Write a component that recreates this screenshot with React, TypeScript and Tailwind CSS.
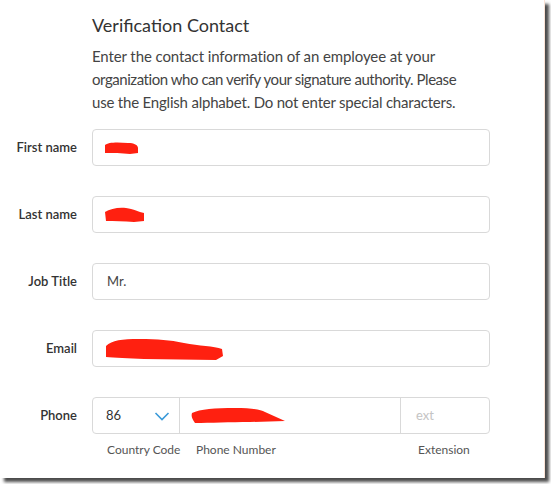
import React from "react";

const Scribble = ({ d, w, h }: { d: string; w: number; h: number }) => (
  <svg width={w} height={h} viewBox={`0 0 ${w} ${h}`} className="block">
    <path d={d} fill="#ff2010" />
  </svg>
);

const Row = ({ label, children }: { label: string; children: React.ReactNode }) => (
  <div className="flex items-center h-[37px]">
    <div className="w-[77px] text-right text-[13px] font-semibold text-[#333]">{label}</div>
    <div className="ml-[15px] w-[398px] h-[37px]">{children}</div>
  </div>
);

const Box = ({ children }: { children?: React.ReactNode }) => (
  <div className="h-full w-full rounded-[4px] border border-[#d9d9d9] bg-white flex items-center pl-[11px]">
    {children}
  </div>
);

export default function App() {
  return (
    <div className="w-[551px] h-[484px] bg-white" style={{ fontFamily: "Lato, 'Open Sans', sans-serif" }}>
      <div className="w-[545px] h-[478px] bg-white border-r border-[#fbe3d6] shadow-[4px_4px_3px_rgba(0,0,0,0.7)] flex flex-col">
        <div className="pl-[92px] pt-[13px]">
          <h1 className="text-[18px] leading-[24px] text-[#333]">Verification Contact</h1>
          <p className="mt-[8px] whitespace-nowrap text-[15px] leading-[23px] text-[#444] tracking-[-0.1px]">
            Enter the contact information of an employee at your
            <br />
            <span className="tracking-[-0.45px]">organization who can verify your signature authority. Please</span>
            <br />
            <span className="tracking-[-0.2px]">use the English alphabet. Do not enter special characters.</span>
          </p>
        </div>
        <div className="mt-[15px] flex flex-col gap-[30px]">
          <Row label="First name">
            <Box>
              <Scribble w={36} h={14} d="M1 4 C4 1 14 1 24 2 C30 2 34 4 34 7 L34 12 L26 13 C18 12 8 12 1 12 Z" />
            </Box>
          </Row>
          <Row label="Last name">
            <Box>
              <Scribble w={42} h={16} d="M1 5 C6 2 14 0 22 1 C30 2 32 4 36 5 L40 6 L40 14 L30 15 C20 14 10 14 2 14 Z" />
            </Box>
          </Row>
          <Row label="Job Title">
            <Box>
              <span className="text-[13px] text-[#444] pl-[3px]">Mr.</span>
            </Box>
          </Row>
          <Row label="Email">
            <Box>
              <Scribble w={121} h={24} d="M2 9 C8 3 18 2 35 2 C55 2 65 3 80 6 C95 9 110 9 118 12 L119 19 L112 23 L40 22 C25 21 10 21 2 20 Z" />
            </Box>
          </Row>
          <div className="flex flex-col">
            <Row label="Phone">
              <div className="h-full w-full rounded-[4px] border border-[#d9d9d9] bg-white flex">
                <div className="w-[87px] flex items-center pl-[13px] pr-[9px] border-r border-[#d9d9d9]">
                  <span className="text-[13px] text-[#333] flex-1">86</span>
                  <svg width="16" height="10" viewBox="0 0 16 10">
                    <polyline points="1.5,2 8,8.5 14.5,2" fill="none" stroke="#3a9ad9" strokeWidth="1.6" />
                  </svg>
                </div>
                <div className="flex-1 flex items-center pl-[10px] border-r border-[#d9d9d9]">
                  <Scribble w={97} h={18} d="M2 6 C10 2 25 1 45 1 C60 1 70 2 75 5 L95 14 L60 15 C40 15 20 16 5 16 C2 12 1 9 2 6 Z" />
                </div>
                <div className="w-[88px] flex items-center pl-[15px]">
                  <span className="text-[13px] text-[#c4c4c4]">ext</span>
                </div>
              </div>
            </Row>
            <div className="flex ml-[107px] mt-[7px] text-[12px] text-[#555]">
              <span className="w-[89px]">Country Code</span>
              <span className="w-[222px]">Phone Number</span>
              <span>Extension</span>
            </div>
          </div>
        </div>
      </div>
    </div>
  );
}
